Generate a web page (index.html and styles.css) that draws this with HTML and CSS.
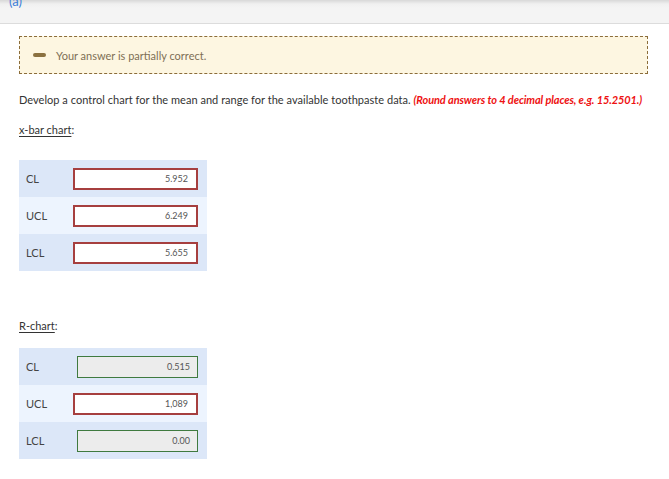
FILE: index.html
```html
<!DOCTYPE html>
<html>
<head>
<meta charset="utf-8">
<link rel="stylesheet" href="styles.css">
</head>
<body>
<div class="header"><span class="part">(a)</span></div>
<div class="content">
  <div class="alert">
    <span class="minus"></span>
    <span class="alert-text">Your answer is partially correct.</span>
  </div>
  <p class="question">Develop a control chart for the mean and range for the available toothpaste data. <em class="hint">(Round answers to 4 decimal places, e.g. 15.2501.)</em></p>
  <p class="chart-title"><u>x-bar chart</u>:</p>
  <div class="table">
    <div class="row dark"><span class="label">CL</span><span class="input wrong">5.952</span></div>
    <div class="row light"><span class="label">UCL</span><span class="input wrong">6.249</span></div>
    <div class="row dark"><span class="label">LCL</span><span class="input wrong">5.655</span></div>
  </div>
  <p class="chart-title r-title"><u>R-chart</u>:</p>
  <div class="table r-table">
    <div class="row dark"><span class="label">CL</span><span class="input right">0.515</span></div>
    <div class="row light"><span class="label">UCL</span><span class="input wrong">1,089</span></div>
    <div class="row dark"><span class="label">LCL</span><span class="input right">0.00</span></div>
  </div>
</div>
</body>
</html>
```
FILE: styles.css
```css
html, body {
  margin: 0;
  padding: 0;
  background: #fff;
  font-family: Lato, "Open Sans", sans-serif;
  color: #333;
}
.header {
  height: 24px;
  background: linear-gradient(#d8d8d8 0, #f0f0f0 4px, #f4f4f4 8px);
  border-bottom: 1px solid #dcdcdc;
  overflow: hidden;
  box-sizing: border-box;
}
.part {
  display: block;
  margin: -6px 0 0 9px;
  color: #3b7dd8;
  font-size: 13px;
  line-height: 15px;
}
.content {
  padding: 0 21px 0 19px;
}
.alert {
  margin-top: 12px;
  height: 38px;
  box-sizing: border-box;
  border: 1px dashed #8b6d3a;
  background: #fdf6e1;
  display: flex;
  align-items: center;
  padding-left: 13px;
}
.minus {
  width: 13px;
  height: 4px;
  border-radius: 2px;
  background: #8b7140;
}
.alert-text {
  margin-left: 10px;
  font-size: 11px;
  color: #7d6f55;
}
.question {
  margin: 19px 0 0 0;
  font-size: 11px;
  line-height: 14px;
  color: #333;
  white-space: nowrap;
  letter-spacing: 0.03px;
}
.hint {
  color: #ee1111;
  font-weight: bold;
  font-style: italic;
  font-size: 11px;
  letter-spacing: -0.1px;
}
.chart-title {
  margin: 16px 0 0 0;
  font-size: 11px;
  line-height: 14px;
}
.chart-title u {
  text-decoration-thickness: 1px;
  text-underline-offset: 2px;
}
.table {
  margin-top: 23px;
  width: 188px;
}
.r-title {
  margin-top: 48px;
}
.r-table {
  margin-top: 15px;
}
.row {
  height: 37px;
  display: flex;
  align-items: center;
}
.dark { background: #dce7f8; }
.light { background: #edf4fe; }
.label {
  width: 54px;
  padding-left: 7px;
  box-sizing: border-box;
  font-size: 11px;
  color: #444;
}
.input {
  box-sizing: border-box;
  height: 22px;
  font-size: 9px;
  color: #555;
  text-align: right;
  line-height: 18px;
  padding-right: 8px;
}
.wrong {
  width: 125px;
  border: 2px solid #a63f3f;
  background: #fff;
}
.right {
  width: 121px;
  margin-left: 4px;
  border: 1px solid #3f7a3f;
  background: #ececec;
  line-height: 20px;
  padding-right: 7px;
}
```
